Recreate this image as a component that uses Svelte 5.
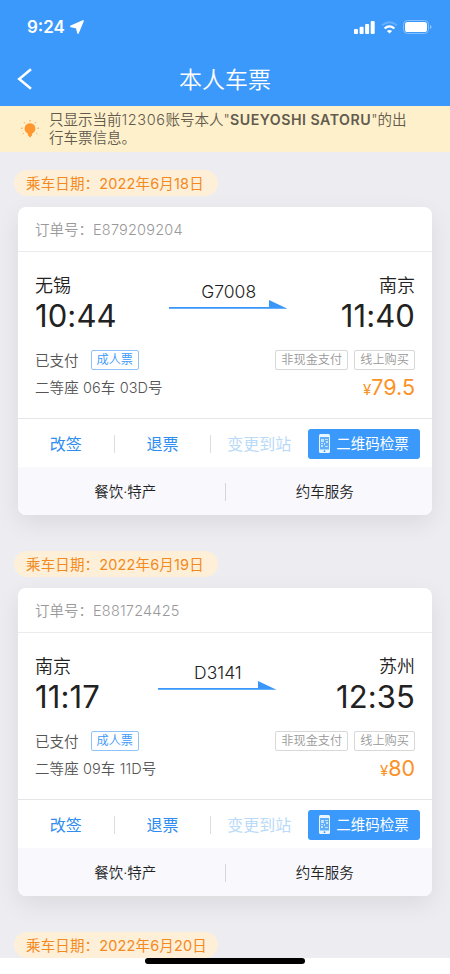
<script>
    const tickets = [
        {
            date: '2022年6月18日',
            order: 'E879209204',
            from: '无锡',
            depart: '10:44',
            to: '南京',
            arrive: '11:40',
            train: 'G7008',
            seat: '二等座 06车 03D号',
            price: '79.5'
        },
        {
            date: '2022年6月19日',
            order: 'E881724425',
            from: '南京',
            depart: '11:17',
            to: '苏州',
            arrive: '12:35',
            train: 'D3141',
            seat: '二等座 09车 11D号',
            price: '80'
        }
    ];
    const nextDate = '2022年6月20日';
</script>

<div class="screen">
    <header>
        <div class="status-bar">
            <div class="clock">
                <span>9:24</span>
                <svg width="14" height="14" viewBox="0 0 14 14"><path d="M13 1 8 13 6.7 7.6 1 6.3z" fill="#fff" stroke="#fff" stroke-width="1.7" stroke-linejoin="round" /></svg>
            </div>
            <div class="status-icons">
                <svg width="21" height="13" viewBox="0 0 21 13" fill="#fff">
                    <rect x="0" y="8" width="4" height="5" rx="1" />
                    <rect x="5.6" y="5.8" width="4" height="7.2" rx="1" />
                    <rect x="11.1" y="3" width="4" height="10" rx="1" />
                    <rect x="16.7" y="0" width="4" height="13" rx="1" />
                </svg>
                <svg class="wifi" width="17" height="13" viewBox="0 0 17 13" fill="none">
                    <path d="M1 4.4Q8.5-1.8 16 4.4" stroke="#68b0ff" stroke-width="1.8" />
                    <path d="M3.6 7.5Q8.5 3.2 13.4 7.5" stroke="#fff" stroke-width="2.3" />
                    <path d="M8.5 12.6 5.9 9.9Q8.5 7.9 11.1 9.9z" fill="#fff" />
                </svg>
                <svg width="29" height="14" viewBox="0 0 29 14">
                    <rect x=".5" y=".5" width="25" height="13" rx="4" fill="none" stroke="#85beff" />
                    <rect x="2" y="2" width="22" height="10" rx="2.6" fill="#fff" />
                    <path d="M27 5q1.5.4 1.5 2T27 9z" fill="#94c7ff" />
                </svg>
            </div>
        </div>
        <nav>
            <button class="back" aria-label="返回">
                <svg width="16" height="22" viewBox="0 0 16 22"><path d="M14 1.2 2.2 11 14 20.8" fill="none" stroke="#fff" stroke-width="2.5" /></svg>
            </button>
            <h1>本人车票</h1>
        </nav>
    </header>

    <div class="notice">
        <svg width="18" height="18" viewBox="0 0 18 18">
            <path d="M9 3.2a5.3 5.3 0 0 1 3 9.7l-.9.7v1.6L9 17.4l-2.1-2.2v-1.6l-.9-.7a5.3 5.3 0 0 1 3-9.7z" fill="#ff962e" />
            <path d="M9 0v1.5M3 2.2l1 1.1M15 2.2l-1 1.1M0 8.2h1.6M16.4 8.2H18M2.6 13.3l-1 .7M15.4 13.3l1 .7" stroke="#ff962e" />
        </svg>
        <p>只显示当前<span class="num">12306</span>账号本人"<b>SUEYOSHI SATORU</b>"的出<br />行车票信息。</p>
    </div>

    <main>
        {#each tickets as t}
            <div class="date">乘车日期：{t.date}</div>
            <section class="card">
                <div class="order">订单号：<span class="order-no">{t.order}</span></div>
                <div class="body">
                    <div class="trip">
                        <div class="stop">
                            <span class="station">{t.from}</span>
                            <span class="time">{t.depart}</span>
                        </div>
                        <div class="train">
                            <span>{t.train}</span>
                            <svg width="119" height="9" viewBox="0 0 119 9"><path d="M0 7h100V0l18.5 8.7H0z" fill="#3997fb" /></svg>
                        </div>
                        <div class="stop right">
                            <span class="station">{t.to}</span>
                            <span class="time">{t.arrive}</span>
                        </div>
                    </div>
                    <div class="row paid">
                        <span>已支付</span>
                        <span class="tag blue">成人票</span>
                        <span class="tag push">非现金支付</span>
                        <span class="tag">线上购买</span>
                    </div>
                    <div class="row">
                        <span class="seat">{t.seat}</span>
                        <span class="price"><small>¥</small>{t.price}</span>
                    </div>
                </div>
                <div class="actions">
                    <span class="action">改签</span>
                    <span class="action">退票</span>
                    <span class="action disabled">变更到站</span>
                    <button class="qr">
                        <svg width="11" height="19" viewBox="0 0 11 19">
                            <rect width="11" height="19" rx="1.5" fill="#e9f6ff" />
                            <rect x="1" y="3" width="9" height="12.5" fill="#5eaefb" />
                            <path d="M2 5h3v3H2zM6 5h3v1H6zM7 7h2v2H7zM2 9h2v1H2zM5 9h1v2H5zM2 11h2v2H2zM6 12h3v1H6z" fill="#c2e1ff" />
                            <circle cx="5.5" cy="17.2" r=".9" fill="#3997fb" />
                        </svg>
                        <span>二维码检票</span>
                    </button>
                </div>
                <div class="services">
                    <span>餐饮·特产</span>
                    <span>约车服务</span>
                </div>
            </section>
        {/each}
        <div class="date">乘车日期：{nextDate}</div>
    </main>

    <footer><div class="home-bar"></div></footer>
</div>

<style>
    :global(body) {
        margin: 0;
        background: #fff;
    }

    .screen {
        display: flex;
        flex-direction: column;
        width: 450px;
        height: 974px;
        overflow: hidden;
        font-family: Inter, "Noto Sans CJK SC", sans-serif;
        font-size: 14.5px;
        font-weight: 350;
        color: #222;
        white-space: nowrap;
    }

    .screen * {
        box-sizing: border-box;
    }

    svg {
        display: block;
        flex: none;
    }

    button {
        border: 0;
        padding: 0;
        font: inherit;
        color: #fff;
        background: none;
    }

    header {
        flex: none;
        height: 106px;
        background: #3b99fc;
        color: #fff;
    }

    .status-bar {
        display: flex;
        justify-content: space-between;
        align-items: center;
        height: 54px;
        padding: 0 18px 0 27px;
    }

    .clock {
        display: flex;
        align-items: center;
        gap: 5px;
        font-size: 17px;
        font-weight: 600;
    }

    .status-icons {
        display: flex;
        align-items: center;
    }

    .wifi {
        margin: 0 5px 0 6px;
    }

    nav {
        display: grid;
        grid-template-columns: 60px 1fr 60px;
        align-items: center;
        height: 50px;
    }

    .back {
        padding-left: 17px;
    }

    h1 {
        margin: 0;
        padding-top: 1px;
        font-size: 23px;
        font-weight: 350;
        line-height: 30px;
        text-align: center;
    }

    .notice {
        display: flex;
        flex: none;
        align-items: center;
        gap: 10px;
        height: 46px;
        padding-left: 21px;
        background: #fef0cb;
        color: #625b4e;
    }

    .notice p {
        margin: 0;
        line-height: 18px;
    }

    .notice b {
        font-weight: 600;
        font-size: 14.2px;
        letter-spacing: 0.5px;
    }

    .num {
        letter-spacing: 0.6px;
    }

    .order-no {
        letter-spacing: 0.2px;
    }

    main {
        flex: none;
        height: 806px;
        padding: 18px 18px 0;
        overflow: hidden;
        background: #ededf1;
    }

    .date {
        width: 204px;
        height: 26px;
        margin: 0 0 11px -4px;
        padding-left: 12px;
        border-radius: 13px;
        background: #feefd9;
        color: #f28a20;
        font-weight: 400;
        line-height: 28px;
        letter-spacing: 0.15px;
    }

    .card {
        height: 308px;
        margin-bottom: 36px;
        border-radius: 8px;
        overflow: hidden;
        background: #fff;
        box-shadow: 0 8px 24px rgba(0, 0, 0, 0.08);
    }

    .order {
        height: 45px;
        padding-left: 17px;
        border-bottom: 1px solid #ebebed;
        color: #999;
        line-height: 46px;
    }

    .body {
        height: 167px;
        padding: 22px 17px 0;
        border-bottom: 1px solid #e5e6e8;
    }

    .trip {
        display: flex;
        justify-content: space-between;
    }

    .stop {
        display: flex;
        flex-direction: column;
    }

    .right {
        align-items: flex-end;
    }

    .station {
        font-size: 18px;
        line-height: 24px;
    }

    .time {
        font-size: 31px;
        font-weight: 400;
        line-height: 36px;
        letter-spacing: 0.1px;
    }

    .train {
        display: flex;
        flex-direction: column;
        align-items: center;
        padding-top: 8px;
        font-size: 17.5px;
        line-height: 20px;
    }

    .train svg {
        margin-top: -2px;
    }

    .row {
        display: flex;
        align-items: center;
        height: 28px;
        color: #555;
    }

    .paid {
        margin-top: 11px;
    }

    .seat {
        padding-bottom: 1px;
        letter-spacing: 0.1px;
    }

    .tag {
        height: 20px;
        margin: 1px 0 0 6px;
        padding: 0 5px;
        border: 1px solid #d8d8d8;
        border-radius: 2px;
        color: #999;
        font-size: 12.2px;
        line-height: 18px;
    }

    .blue {
        margin-left: 12px;
        border-color: #8fc4fb;
        color: #3997fb;
    }

    .push {
        margin-left: auto;
    }

    .price {
        margin-left: auto;
        color: #fb9226;
        font-size: 21.5px;
        font-weight: 400;
    }

    .price small {
        font-size: 15px;
    }

    .actions {
        display: flex;
        align-items: center;
        height: 48px;
        padding: 1px 12px 0 0;
    }

    .action {
        flex: 1;
        border-right: 1px solid #dcdde0;
        color: #2f8def;
        font-size: 16px;
        font-weight: 400;
        line-height: 18px;
        text-align: center;
    }

    .disabled {
        border-right-color: transparent;
        color: #b9daf8;
    }

    .qr {
        display: flex;
        align-items: center;
        justify-content: center;
        gap: 6px;
        width: 112px;
        height: 30px;
        border-radius: 3px;
        background: #3b99fc;
        font-weight: 400;
    }

    .qr span {
        line-height: 18px;
    }

    .services {
        display: flex;
        align-items: center;
        height: 48px;
        padding: 1px 8px 0;
        background: #f8f8fd;
    }

    .services span {
        flex: 1;
        line-height: 18px;
        text-align: center;
    }

    .services span:first-child {
        border-right: 1px solid #d5d5dc;
    }

    footer {
        display: flex;
        justify-content: center;
        height: 16px;
    }

    .home-bar {
        width: 160px;
        height: 6px;
        border-radius: 3px;
        background: #000;
    }
</style>
